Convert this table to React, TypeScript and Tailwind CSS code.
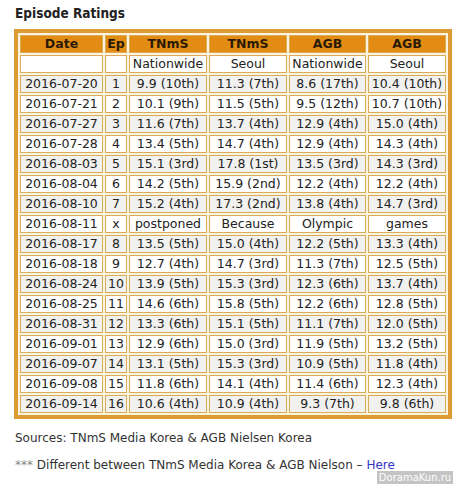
import React from "react";

const rows: string[][] = [
  ["2016-07-20", "1", "9.9 (10th)", "11.3 (7th)", "8.6 (17th)", "10.4 (10th)"],
  ["2016-07-21", "2", "10.1 (9th)", "11.5 (5th)", "9.5 (12th)", "10.7 (10th)"],
  ["2016-07-27", "3", "11.6 (7th)", "13.7 (4th)", "12.9 (4th)", "15.0 (4th)"],
  ["2016-07-28", "4", "13.4 (5th)", "14.7 (4th)", "12.9 (4th)", "14.3 (4th)"],
  ["2016-08-03", "5", "15.1 (3rd)", "17.8 (1st)", "13.5 (3rd)", "14.3 (3rd)"],
  ["2016-08-04", "6", "14.2 (5th)", "15.9 (2nd)", "12.2 (4th)", "12.2 (4th)"],
  ["2016-08-10", "7", "15.2 (4th)", "17.3 (2nd)", "13.8 (4th)", "14.7 (3rd)"],
  ["2016-08-11", "x", "postponed", "Because", "Olympic", "games"],
  ["2016-08-17", "8", "13.5 (5th)", "15.0 (4th)", "12.2 (5th)", "13.3 (4th)"],
  ["2016-08-18", "9", "12.7 (4th)", "14.7 (3rd)", "11.3 (7th)", "12.5 (5th)"],
  ["2016-08-24", "10", "13.9 (5th)", "15.3 (3rd)", "12.3 (6th)", "13.7 (4th)"],
  ["2016-08-25", "11", "14.6 (6th)", "15.8 (5th)", "12.2 (6th)", "12.8 (5th)"],
  ["2016-08-31", "12", "13.3 (6th)", "15.1 (5th)", "11.1 (7th)", "12.0 (5th)"],
  ["2016-09-01", "13", "12.9 (6th)", "15.0 (3rd)", "11.9 (5th)", "13.2 (5th)"],
  ["2016-09-07", "14", "13.1 (5th)", "15.3 (3rd)", "10.9 (5th)", "11.8 (4th)"],
  ["2016-09-08", "15", "11.8 (6th)", "14.1 (4th)", "11.4 (6th)", "12.3 (4th)"],
  ["2016-09-14", "16", "10.6 (4th)", "10.9 (4th)", "9.3 (7th)", "9.8 (6th)"],
];

const heads = ["Date", "Ep", "TNmS", "TNmS", "AGB", "AGB"];
const subs = ["", "", "Nationwide", "Seoul", "Nationwide", "Seoul"];

function App() {
  return (
    <div className="relative w-[473px] h-[484px] bg-white overflow-hidden font-['DejaVu_Sans',sans-serif] text-[#222]">
      <div className="px-[15px] pt-[4px]">
        <h3 className="text-[13.5px] font-bold leading-[18px] font-['DejaVu_Sans_Condensed','DejaVu_Sans',sans-serif]">
          Episode Ratings
        </h3>

        <table className="mt-[7px] -ml-[1px] w-[438px] table-fixed border-separate border-spacing-[2px] border-[4px] border-[#dc9c33] bg-[#fcf3e1] text-[12.5px] text-center">
          <colgroup>
            <col className="w-[83px]" />
            <col className="w-[22px]" />
            <col className="w-[78px]" />
            <col className="w-[78px]" />
            <col className="w-[77px]" />
            <col className="w-[78px]" />
          </colgroup>
          <thead>
            <tr>
              {heads.map((h, i) => (
                <th key={i} className="h-[18px] p-0 leading-[16px] border border-[#d9ad57] bg-[#e38c13] font-bold text-[#2a1a05]">
                  {h}
                </th>
              ))}
            </tr>
          </thead>
          <tbody>
            <tr>
              {subs.map((s, i) => (
                <td key={i} className="h-[18px] p-0 leading-[16px] border border-[#d9ad57] bg-white">
                  {s}
                </td>
              ))}
            </tr>
            {rows.map((r, ri) => (
              <tr key={ri} className={ri % 2 === 0 ? "bg-[#f1f1ef]" : "bg-white"}>
                {r.map((c, ci) => (
                  <td key={ci} className="h-[18px] p-0 leading-[16px] border border-[#d9ad57] whitespace-nowrap">
                    {c}
                  </td>
                ))}
              </tr>
            ))}
          </tbody>
        </table>

        <p className="mt-[11px] text-[12px] leading-[16px] text-[#333]">
          Sources: TNmS Media Korea &amp; AGB Nielsen Korea
        </p>
        <p className="mt-[11px] text-[12px] leading-[16px] text-[#333]">
          <span className="text-[#888]">***</span> Different between TNmS Media Korea &amp; AGB Nielson –{" "}
          <a href="#" className="text-[#3434c4]">Here</a>
        </p>
      </div>

      <div className="absolute right-[20px] bottom-0 w-[76px] h-[13px] bg-[#c4c4c4] text-white text-[10px] leading-[13px] text-center">
        DoramaKun.ru
      </div>
    </div>
  );
}

export default App;
